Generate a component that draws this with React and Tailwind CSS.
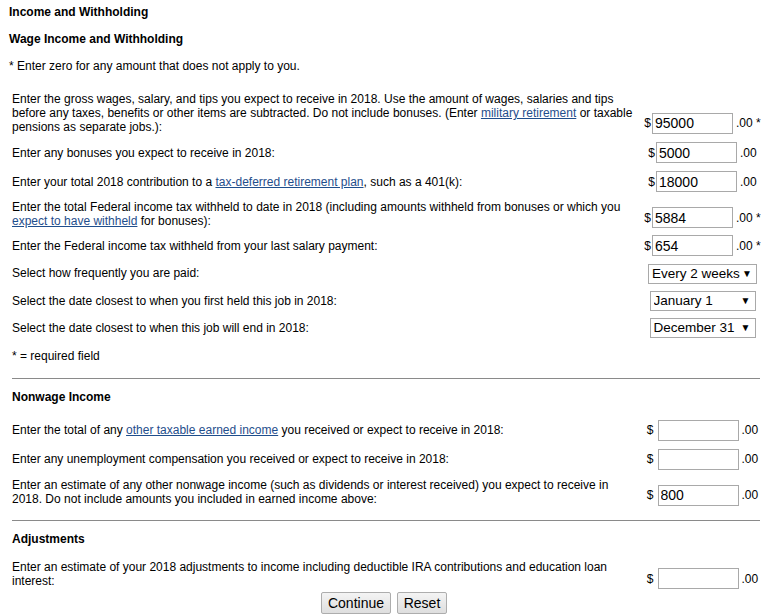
import React from 'react';

const FONT = { fontFamily: '"Liberation Sans", Arial, sans-serif' };

const Link = ({ children }) => (
    <a href="#" className="text-[#1f4e8c] underline">{children}</a>
);

// $ [input] .00 *
const Amount = ({ value = '', required = false, spaced = false }) => (
    <div className="flex items-center whitespace-nowrap">
        <span className={spaced ? 'mr-[4px]' : 'mr-px'}>$</span>
        <input
            type="text"
            defaultValue={value}
            readOnly
            className="shrink-0 w-[81px] h-[21px] border border-[#a9a9a9] px-[2px] text-[14px] text-black bg-white outline-none"
            style={FONT}
        />
        <span className="ml-[3px] shrink-0">.00{required ? ' *' : ''}</span>
    </div>
);

const Select = ({ value, width }) => (
    <div className={`relative shrink-0 ${width} h-[20px]`}>
        <select
            defaultValue={value}
            className="w-full h-full appearance-none border border-[#a9a9a9] bg-white pl-[3px] text-[13.5px] text-black leading-[18px] outline-none"
            style={FONT}
        >
            <option>{value}</option>
        </select>
        <span className="absolute right-[5px] top-[4px] text-[10px] leading-[12px] pointer-events-none">▼</span>
    </div>
);

const Row = ({ h, label, control, shift = '' }) => (
    <div className={`flex items-center ${h}`}>
        <div className="w-[622px] shrink-0">{label}</div>
        <div className={`ml-[11px] w-[115px] shrink-0 flex justify-center ${shift}`}>{control}</div>
    </div>
);

const Button = ({ children, w }) => (
    <button
        type="button"
        className={`${w} h-[22px] border border-[#adadad] rounded-[2px] bg-gradient-to-b from-[#f4f4f4] to-[#dedede] text-[14px] text-black`}
        style={FONT}
    >
        {children}
    </button>
);

export default function App() {
    return (
        <div className="w-[774px] h-[616px] overflow-hidden bg-white text-black text-[12px] leading-[14px] pt-[5px] pl-[9px]" style={FONT}>
            <div className="font-bold">Income and Withholding</div>
            <div className="font-bold mt-[13px]">Wage Income and Withholding</div>
            <div className="mt-[13px]">* Enter zero for any amount that does not apply to you.</div>

            <div className="pl-[3px] mt-[15px] w-[751px]">
                {/* Wage rows */}
                <Row
                    h="h-[50px]"
                    shift="mt-[20px]"
                    label={<>Enter the gross wages, salary, and tips you expect to receive in 2018. Use the amount of wages, salaries and tips before any taxes, benefits or other items are subtracted. Do not include bonuses. (Enter <Link>military retirement</Link> or taxable pensions as separate jobs.):</>}
                    control={<Amount value="95000" required />}
                />
                <Row h="h-[29px]" label="Enter any bonuses you expect to receive in 2018:" control={<Amount value="5000" />} />
                <Row
                    h="h-[29px]"
                    label={<>Enter your total 2018 contribution to a <Link>tax-deferred retirement plan</Link>, such as a 401(k):</>}
                    control={<Amount value="18000" />}
                />
                <Row
                    h="h-[36px]"
                    shift="mt-[7px]"
                    label={<>Enter the total Federal income tax withheld to date in 2018 (including amounts withheld from bonuses or which you <Link>expect to have withheld</Link> for bonuses):</>}
                    control={<Amount value="5884" required />}
                />
                <Row h="h-[27px]" label="Enter the Federal income tax withheld from your last salary payment:" control={<Amount value="654" required />} />
                <Row h="h-[28px]" shift="mt-[2px]" label="Select how frequently you are paid:" control={<Select value="Every 2 weeks" width="w-[109px]" />} />
                <Row h="h-[27px]" shift="mt-[1px]" label="Select the date closest to when you first held this job in 2018:" control={<Select value="January 1" width="w-[106px]" />} />
                <Row h="h-[27px]" shift="mt-[1px]" label="Select the date closest to when this job will end in 2018:" control={<Select value="December 31" width="w-[106px]" />} />

                <div className="mt-[8px]">* = required field</div>

                <div className="mt-[15px] border-t border-[#8a8a8a]" />

                {/* Nonwage */}
                <div className="font-bold mt-[11px]">Nonwage Income</div>
                <div className="mt-[12px]">
                    <Row
                        h="h-[28px]"
                        label={<>Enter the total of any <Link>other taxable earned income</Link> you received or expect to receive in 2018:</>}
                        control={<Amount spaced />}
                    />
                    <Row h="h-[30px]" label="Enter any unemployment compensation you received or expect to receive in 2018:" control={<Amount spaced />} />
                    <Row
                        h="h-[36px]"
                        shift="mt-[6px]"
                        label="Enter an estimate of any other nonwage income (such as dividends or interest received) you expect to receive in 2018. Do not include amounts you included in earned income above:"
                        control={<Amount value="800" spaced />}
                    />
                </div>

                <div className="mt-[10px] border-t border-[#8a8a8a]" />

                {/* Adjustments */}
                <div className="font-bold mt-[11px]">Adjustments</div>
                <div className="mt-[10px]">
                    <Row
                        h="h-[36px]"
                        shift="mt-[9px]"
                        label="Enter an estimate of your 2018 adjustments to income including deductible IRA contributions and education loan interest:"
                        control={<Amount spaced />}
                    />
                </div>

                <div className="flex justify-center gap-[6px] pr-[4px]">
                    <Button w="w-[70px]">Continue</Button>
                    <Button w="w-[50px]">Reset</Button>
                </div>
            </div>
        </div>
    );
}
